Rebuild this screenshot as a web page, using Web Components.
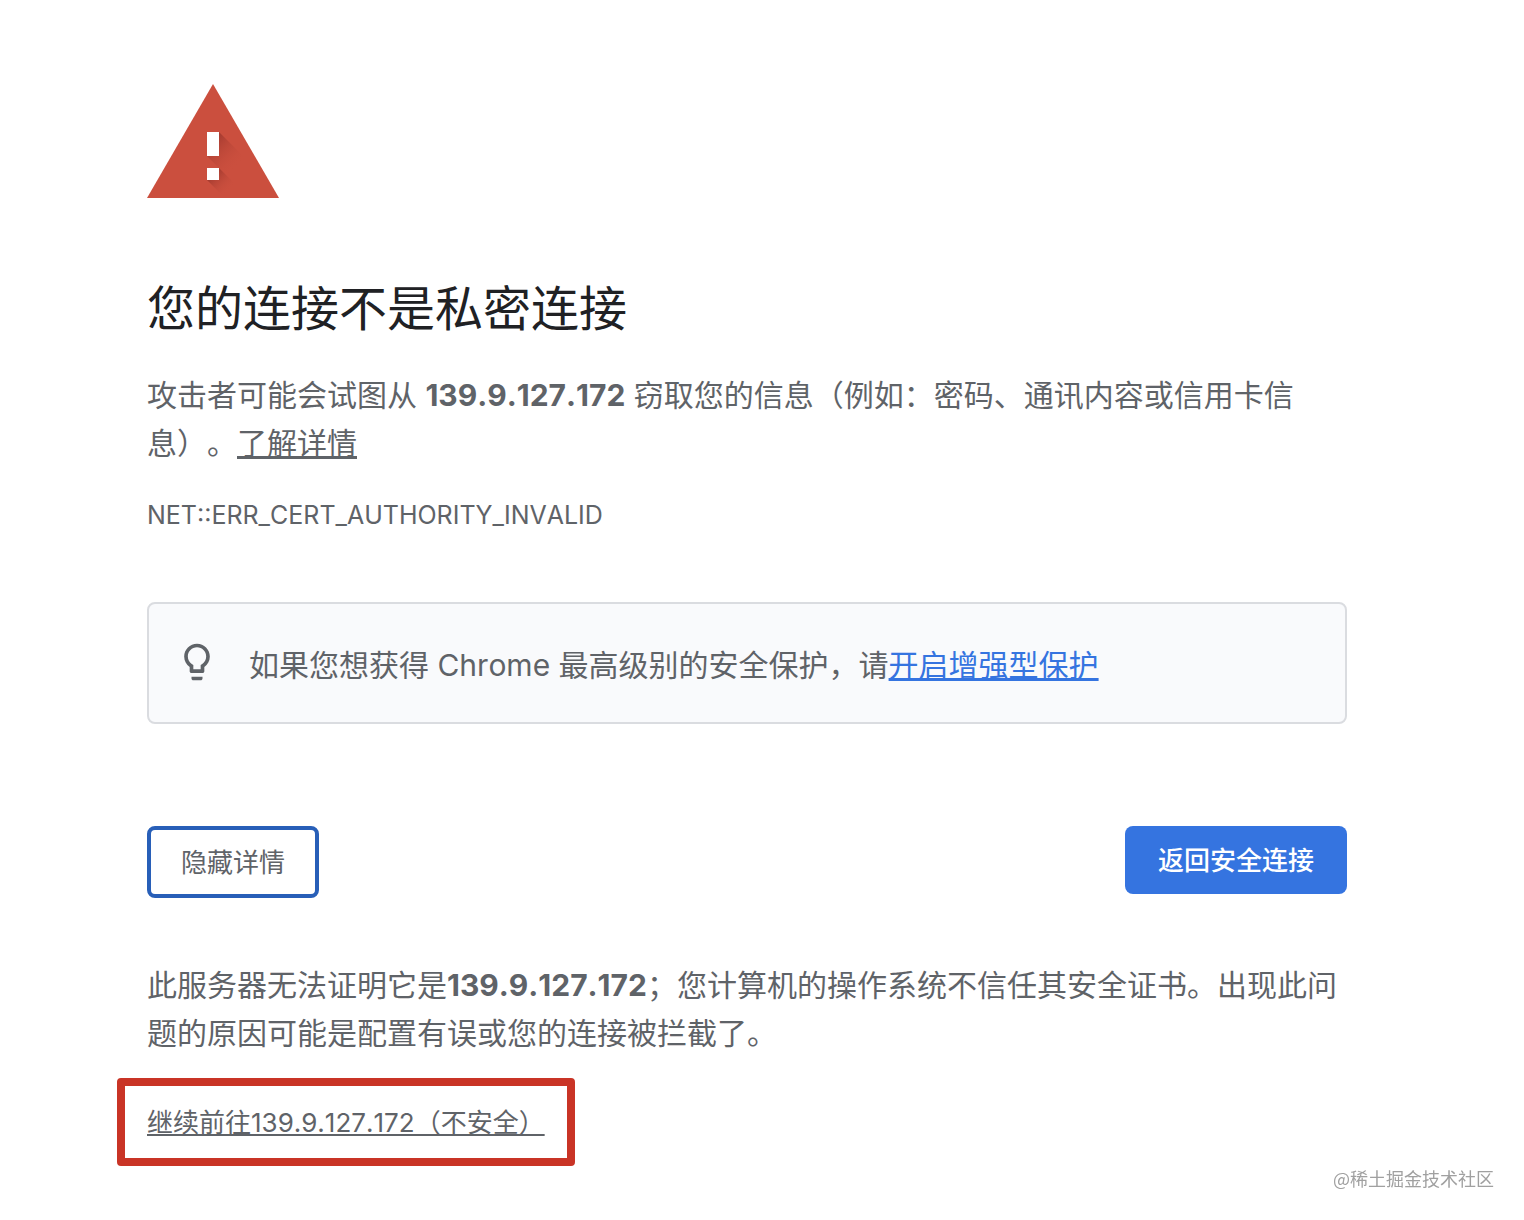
<!DOCTYPE html>
<html lang="zh-CN">
<head>
  <meta charset="UTF-8">
  <title>隐私设置错误</title>
  <style>
    body {
      margin: 0;
      background: #fff;
      color: #5f6368;
      font-family: Inter, "Noto Sans CJK SC", sans-serif;
      font-size: 30px;
      font-kerning: none;
      line-height: 48px;
      text-spacing-trim: space-all;
    }
  </style>
</head>
<body>
<ssl-interstitial host="139.9.127.172"></ssl-interstitial>
<water-mark>@稀土掘金技术社区</water-mark>

<script>
class WarningIcon extends HTMLElement {
  constructor() {
    super();
    const shadow = this.attachShadow({ mode: 'open' });
    shadow.innerHTML = `
      <style>
        :host { display: block; }
        svg { display: block; width: 132px; height: 114px; }
      </style>
      <svg viewBox="0 0 132 114" aria-hidden="true">
        <defs>
          <linearGradient id="long" x1="66" y1="54" x2="92" y2="80" gradientUnits="userSpaceOnUse">
            <stop offset="0" stop-color="#a33a2f"/>
            <stop offset="1" stop-color="#cb4f3e" stop-opacity="0"/>
          </linearGradient>
          <linearGradient id="short" x1="66" y1="90" x2="82" y2="106" gradientUnits="userSpaceOnUse">
            <stop offset="0" stop-color="#a33a2f"/>
            <stop offset="1" stop-color="#cb4f3e" stop-opacity="0"/>
          </linearGradient>
        </defs>
        <path fill="#cb4f3e" d="M66 0L132 114H0Z"/>
        <path fill="url(#long)" d="M72 48L104 80L92 104L60 72Z"/>
        <path fill="url(#short)" d="M72 84L96 108L90 114H78L60 96Z"/>
        <path fill="#fff" d="M60 48h12v24H60zM60 84h12v12H60z"/>
      </svg>
    `;
  }
}

class TipBox extends HTMLElement {
  constructor() {
    super();
    const shadow = this.attachShadow({ mode: 'open' });
    shadow.innerHTML = `
      <style>
        :host {
          display: flex;
          align-items: flex-start;
          gap: 30px;
          padding: 36px 26px 32px;
          border: 2px solid #dadce0;
          border-radius: 8px;
          background: #f9fafc;
        }
        svg { flex: none; width: 44px; height: 44px; fill: #5f6368; }
        div { flex: 1; padding: 1px 0; }
      </style>
      <svg viewBox="0 0 24 24" aria-hidden="true">
        <path d="M9 21c0 .55.45 1 1 1h4c.55 0 1-.45 1-1v-1H9v1zm3-19C8.14 2 5 5.14 5 9c0 2.38 1.19 4.47 3 5.74V17c0 .55.45 1 1 1h6c.55 0 1-.45 1-1v-2.260c1.810-1.270 3-3.360 3-5.740 0-3.860-3.140-7-7-7zm2.850 11.100l-.850.600V16h-4v-2.300l-.850-.600C7.800 12.160 7 10.630 7 9c0-2.760 2.240-5 5-5s5 2.240 5 5c0 1.630-.800 3.160-2.150 4.100z"/>
      </svg>
      <div><slot></slot></div>
    `;
  }
}

class ActionButton extends HTMLElement {
  constructor() {
    super();
    const shadow = this.attachShadow({ mode: 'open' });
    shadow.innerHTML = `
      <style>
        :host { display: block; }
        button {
          display: block;
          margin: 0;
          padding: 17px 30px 15px;
          border: 4px solid #285fb8;
          border-radius: 8px;
          background: #fff;
          color: #5f6368;
          font-family: inherit;
          font-size: 26px;
          line-height: 32px;
          cursor: pointer;
        }
        :host([primary]) button {
          padding: 19px 33px 17px;
          border: 0;
          background: #3574e0;
          color: #fff;
          font-weight: 500;
        }
      </style>
      <button type="button"><slot></slot></button>
    `;
  }
}

class HighlightFrame extends HTMLElement {
  constructor() {
    super();
    const shadow = this.attachShadow({ mode: 'open' });
    shadow.innerHTML = `
      <style>
        :host {
          display: block;
          width: fit-content;
          padding: 21px 22px 19px;
          border: 8px solid #c93426;
          border-radius: 4px;
          font-size: 26px;
          line-height: 32px;
        }
      </style>
      <slot></slot>
    `;
  }
}

class WaterMark extends HTMLElement {
  constructor() {
    super();
    const shadow = this.attachShadow({ mode: 'open' });
    shadow.innerHTML = `
      <style>
        :host {
          position: fixed;
          right: 30px;
          bottom: 30px;
          color: #a0a0a0;
          font-family: "Noto Sans CJK SC", sans-serif;
          font-size: 18px;
          line-height: 24px;
        }
      </style>
      <slot></slot>
    `;
  }
}

class SslInterstitial extends HTMLElement {
  constructor() {
    super();
    this.attachShadow({ mode: 'open' });
  }

  connectedCallback() {
    const host = this.getAttribute('host');
    this.shadowRoot.innerHTML = `
      <style>
        :host { display: block; padding: 84px 60px 54px 30px; }
        main { max-width: 1200px; margin: 0 auto; }
        h1 {
          margin: 82px 0 33px;
          color: #202124;
          font-size: 48px;
          font-weight: 400;
          line-height: 58px;
        }
        p { margin: 0; }
        a { color: inherit; }
        strong { font-weight: 700; }
        .code {
          margin: 32px 0 71px;
          font-size: 25px;
          line-height: 32px;
        }
        .tip-link { color: #3574e0; }
        nav {
          display: flex;
          justify-content: space-between;
          align-items: flex-start;
          margin: 102px 0 63px;
        }
        highlight-frame { margin: 21px 0 0 -30px; }
      </style>
      <main>
        <warning-icon></warning-icon>
        <h1>您的连接不是私密连接</h1>
        <p>攻击者可能会试图从 <strong>${host}</strong> 窃取您的信息（例如：密码、通讯内容或信用卡信息）。<a href="#">了解详情</a></p>
        <p class="code">NET::ERR_CERT_AUTHORITY_INVALID</p>
        <tip-box>如果您想获得 Chrome 最高级别的安全保护，请<a class="tip-link" href="#">开启增强型保护</a></tip-box>
        <nav>
          <action-button>隐藏详情</action-button>
          <action-button primary>返回安全连接</action-button>
        </nav>
        <p>此服务器无法证明它是<strong>${host}</strong>；您计算机的操作系统不信任其安全证书。出现此问题的原因可能是配置有误或您的连接被拦截了。</p>
        <highlight-frame><a href="#">继续前往${host}（不安全）</a></highlight-frame>
      </main>
    `;
  }
}

customElements.define('warning-icon', WarningIcon);
customElements.define('tip-box', TipBox);
customElements.define('action-button', ActionButton);
customElements.define('highlight-frame', HighlightFrame);
customElements.define('water-mark', WaterMark);
customElements.define('ssl-interstitial', SslInterstitial);
</script>
</body>
</html>
